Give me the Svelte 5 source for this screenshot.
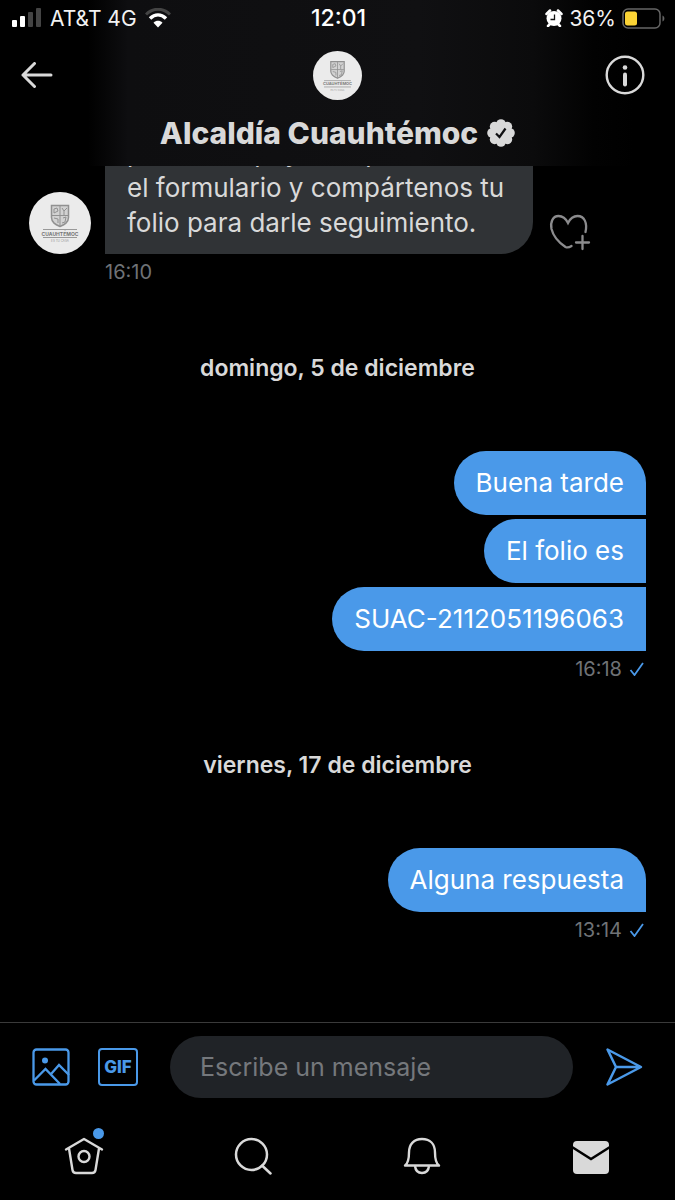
<script lang="ts">
	type Message = { text: string };
	type Group = { date: string; messages: Message[]; time: string };

	const groups: Group[] = [
		{
			date: 'domingo, 5 de diciembre',
			messages: [{ text: 'Buena tarde' }, { text: 'El folio es' }, { text: 'SUAC-2112051196063' }],
			time: '16:18'
		},
		{
			date: 'viernes, 17 de diciembre',
			messages: [{ text: 'Alguna respuesta' }],
			time: '13:14'
		}
	];

	let draft = $state('');

	function handleSubmit(event: SubmitEvent) {
		event.preventDefault();
		draft = '';
	}
</script>

{#snippet crest()}
	<svg viewBox="0 0 62 62" aria-hidden="true">
		<circle cx="31" cy="31" r="31" fill="#ebebeb" />
		<g fill="none" stroke="#919191">
			<path
				d="M22.500 13.500h17v12c0 5-4 7-8.500 9-4.500-2-8.500-4-8.500-9z"
				fill="#d2d2d2"
				stroke-width="1.500"
			/>
			<path d="M23 23.500h16M31 14v20M25 17l3-1 1 3-4 2zM33 16l2 3 3-3M35 19v4M25 26l4 1v4M34 26l3-1-1 5-3 1" />
			<path d="M14 37.500h34M14 45.500h34" stroke="#999" />
		</g>
		<text x="31" y="43.500" text-anchor="middle" font-size="5" font-weight="700" fill="#777">CUAUHTÉMOC</text>
		<text x="31" y="50" text-anchor="middle" font-size="3" fill="#999">ES TU CASA</text>
	</svg>
{/snippet}

<div class="app">
	<header>
		<div class="status-bar">
			<div class="status-side">
				<svg class="signal" viewBox="0 0 30 20" aria-hidden="true">
					<rect y="12" width="5" height="7" rx="1" fill="#fff" />
					<rect x="8" y="8" width="5" height="11" rx="1" fill="#fff" />
					<rect x="16" y="4" width="5" height="15" rx="1" fill="#444" />
					<rect x="24" width="5" height="19" rx="1" fill="#444" />
				</svg>
				<span>AT&amp;T 4G</span>
				<svg class="wifi" viewBox="0 0 26 20" aria-hidden="true">
					<path d="M1 6.500C8-.5 18-.5 25 6.500" fill="none" stroke="#444" stroke-width="3" />
					<path d="M5 10.500c5-4.700 11-4.700 16 0" fill="none" stroke="#fff" stroke-width="3.500" />
					<path d="M8.500 14.700c2.800-2.600 6.200-2.600 9 0L13 19.500z" fill="#fff" />
				</svg>
			</div>
			<time class="clock">12:01</time>
			<div class="status-side right">
				<svg class="alarm" viewBox="0 0 18 18" aria-hidden="true">
					<path d="M1.500 5 5 1.500M16.500 5 13 1.500M3 17l2-2M15 17l-2-2" stroke="#fff" stroke-width="2.500" stroke-linecap="round" />
					<circle cx="9" cy="9.500" r="7.500" fill="#fff" />
					<path d="M9.500 5.500v5H5.500" fill="none" stroke="#111" stroke-width="1.300" />
				</svg>
				<span>36%</span>
				<svg class="battery" viewBox="0 0 43 21" aria-hidden="true">
					<rect x="1" y="1" width="37" height="19" rx="5" fill="none" stroke="#666" stroke-width="1.500" />
					<rect x="3" y="3.500" width="12" height="14" rx="2.500" fill="#fbd335" />
					<path d="M40.500 7.500c2.500 1 2.500 5 0 6z" fill="#666" />
				</svg>
			</div>
		</div>

		<div class="nav-row">
			<button type="button" aria-label="Atrás">
				<svg class="back" viewBox="0 0 32 26">
					<path d="M13.500 1.500 2 13l11.500 11.500M2 13h28" fill="none" stroke="currentColor" stroke-width="3" stroke-linecap="round" stroke-linejoin="round" />
				</svg>
			</button>
			<div class="avatar small">{@render crest()}</div>
			<button type="button" aria-label="Información">
				<svg class="info" viewBox="0 0 40 40">
					<circle cx="20" cy="20" r="18.300" fill="none" stroke="currentColor" stroke-width="2.400" />
					<circle cx="20" cy="12.500" r="2.300" fill="currentColor" />
					<path d="M20 19.500v10" stroke="currentColor" stroke-width="4" stroke-linecap="round" />
				</svg>
			</button>
		</div>

		<h1>
			Alcaldía Cuauhtémoc
			<svg class="verified" viewBox="0 0 28 28" aria-label="Cuenta verificada">
				<g fill="currentColor">
					<circle cx="14" cy="14" r="10.500" />
					<circle cx="14" cy="5" r="4.800" />
					<circle cx="20.400" cy="7.600" r="4.800" />
					<circle cx="23" cy="14" r="4.800" />
					<circle cx="20.400" cy="20.400" r="4.800" />
					<circle cx="14" cy="23" r="4.800" />
					<circle cx="7.600" cy="20.400" r="4.800" />
					<circle cx="5" cy="14" r="4.800" />
					<circle cx="7.600" cy="7.600" r="4.800" />
				</g>
				<path d="m9 14.500 3.500 3.500 6-8.500" fill="none" stroke="#101012" stroke-width="2.200" />
			</svg>
		</h1>
	</header>

	<main>
		<div class="received">
			<div class="avatar">{@render crest()}</div>
			<p class="bubble">pedimos apoyes captura<br />el formulario y compártenos tu<br />folio para darle seguimiento.</p>
			<button type="button" aria-label="Reaccionar">
				<svg class="heart" viewBox="0 0 42 38">
					<g fill="none" stroke="currentColor" stroke-width="2.300" stroke-linecap="round">
						<path d="M36.500 19c2-9-1-16-8-16-4.500 0-7.500 3-9.500 7-2-4-5-7-9.500-7C4 3 1 9 2.500 16c2 8 8 14 14 18 2 1 3 1 6-1" />
						<path d="M27 29.500h13M33.500 23v13" />
					</g>
				</svg>
			</button>
		</div>
		<time class="stamp">16:10</time>

		{#each groups as group}
			<h2>{group.date}</h2>
			<div class="sent">
				{#each group.messages as message}
					<p class="bubble">{message.text}</p>
				{/each}
			</div>
			<div class="stamp sent-stamp">
				<time>{group.time}</time>
				<svg class="check" viewBox="0 0 16 14" aria-label="Enviado">
					<path d="m1.500 8 4 5L14 1" fill="none" stroke="#4a99e9" stroke-width="1.800" />
				</svg>
			</div>
		{/each}
	</main>

	<form class="composer" onsubmit={handleSubmit}>
		<button type="button" aria-label="Añadir foto">
			<svg class="photo" viewBox="0 0 38 38">
				<g fill="none" stroke="currentColor" stroke-width="2.300">
					<rect x="1.500" y="1.500" width="35" height="35" rx="3" />
					<path d="M2 32.500 13.500 21 28 36M19.500 25.500 27 17l10 10" />
				</g>
				<circle cx="13" cy="12.500" r="3" fill="currentColor" />
			</svg>
		</button>
		<button class="gif" type="button">GIF</button>
		<input bind:value={draft} type="text" placeholder="Escribe un mensaje" aria-label="Escribe un mensaje" />
		<button class="send" type="submit" aria-label="Enviar">
			<svg class="plane" viewBox="0 0 38 40">
				<path d="M2.500 2.500 36 20 2.500 37.500 11 20zM11 20h25" fill="none" stroke="currentColor" stroke-width="2.500" stroke-linejoin="round" />
			</svg>
		</button>
	</form>

	<nav>
		<button type="button" aria-label="Inicio">
			<svg viewBox="0 0 40 38">
				<g fill="none" stroke="currentColor" stroke-width="2.400" stroke-linecap="round" stroke-linejoin="round">
					<path d="M2 12.500 20 2l18 10.500M5 11.500 8.500 33q.500 3 3.500 3h16q3 0 3.500-3L35 11.500" />
					<circle cx="20" cy="19.500" r="5.500" />
				</g>
			</svg>
			<span class="dot"></span>
		</button>
		<button type="button" aria-label="Buscar">
			<svg viewBox="0 0 40 38">
				<g fill="none" stroke="currentColor" stroke-width="2.500" stroke-linecap="round">
					<circle cx="18.500" cy="17.500" r="15.500" />
					<path d="m29 28.500 8.500 8" />
				</g>
			</svg>
		</button>
		<button type="button" aria-label="Notificaciones">
			<svg viewBox="0 0 40 38">
				<g fill="none" stroke="currentColor" stroke-width="2.400" stroke-linejoin="round">
					<path d="M3 28.500c3-2 4-6 4-13C7 7 12 2 20 2s13 5 13 13.500c0 7 1 11 4 13z" />
					<path d="M13 29c.500 4.500 3 7 7 7s6.500-2.500 7-7" />
				</g>
			</svg>
		</button>
		<button type="button" aria-label="Mensajes">
			<svg viewBox="0 0 40 38">
				<rect x="2" y="4" width="36" height="33" rx="4" fill="currentColor" />
				<path d="M1 10 20 22 39 10" fill="none" stroke="#000" stroke-width="2.500" />
			</svg>
		</button>
	</nav>
</div>

<style>
	:global(body) {
		margin: 0;
		background: #000;
	}

	.app {
		display: flex;
		flex-direction: column;
		height: 100vh;
		background: #000;
		color: #d9d9d9;
		font-family: Inter, 'Liberation Sans', sans-serif;
	}

	button {
		display: grid;
		place-items: center;
		padding: 0;
		border: 0;
		background: none;
		color: inherit;
		font: inherit;
		cursor: pointer;
	}

	svg {
		display: block;
		flex: none;
	}

	header {
		flex: none;
		height: 166px;
		background: linear-gradient(90deg, #000 13%, #0e0e10 19%, #101012 62%, #0b0b0c 79%, #020202 88%, #000 94%);
	}

	.status-bar {
		display: grid;
		grid-template-columns: 1fr auto 1fr;
		align-items: center;
		height: 36px;
		padding: 0 10px 0 12px;
		color: #f2f2f2;
		font-size: 21px;
	}

	.status-side {
		display: flex;
		align-items: center;
		gap: 8px;
	}

	.right {
		justify-content: flex-end;
		gap: 6px;
	}

	.clock {
		font-weight: 500;
		font-size: 23px;
		color: #fff;
	}

	.signal {
		width: 30px;
		height: 20px;
	}

	.wifi {
		width: 26px;
		height: 20px;
	}

	.alarm {
		width: 18px;
		height: 18px;
	}

	.battery {
		width: 43px;
		height: 21px;
	}

	.nav-row {
		display: grid;
		grid-template-columns: 1fr auto 1fr;
		align-items: center;
		height: 78px;
	}

	.nav-row button:first-child {
		justify-self: start;
		padding-left: 21px;
	}

	.nav-row button:last-child {
		justify-self: end;
		padding-right: 30px;
	}

	.back {
		width: 32px;
		height: 26px;
	}

	.info {
		width: 40px;
		height: 40px;
	}

	.avatar {
		flex: none;
		width: 62px;
		height: 62px;
	}

	.avatar.small {
		width: 49px;
		height: 49px;
	}

	h1 {
		display: flex;
		align-items: center;
		justify-content: center;
		gap: 9px;
		margin: 0;
		font-size: 30px;
		line-height: 38px;
		font-weight: 800;
	}

	.verified {
		width: 28px;
		height: 28px;
	}

	main {
		display: flex;
		flex: 1;
		flex-direction: column;
		justify-content: flex-end;
		min-height: 0;
		padding: 0 29px 79px;
		overflow: hidden;
	}

	.bubble {
		margin: 0;
		padding: 14px 22px;
		border-radius: 32px 0 0 32px;
		background: #4a99e9;
		color: #fff;
		font-size: 26px;
		line-height: 36px;
	}

	.received {
		display: flex;
		align-items: flex-end;
		gap: 14px;
	}

	.received .bubble {
		padding-right: 29px;
		border-radius: 32px 32px 32px 0;
		background: #303336;
		color: #d9d9d9;
		line-height: 35px;
		white-space: nowrap;
	}

	.received button {
		padding: 0 0 3px 2px;
		color: #8b8b8d;
	}

	.heart {
		width: 42px;
		height: 38px;
	}

	.stamp {
		margin: 5px 0 0 76px;
		color: #6f7276;
		font-size: 20px;
		line-height: 26px;
	}

	.sent-stamp {
		display: flex;
		align-items: center;
		justify-content: flex-end;
		gap: 6px;
		margin-left: 0;
	}

	.check {
		width: 18px;
		height: 14px;
	}

	h2 {
		margin: 68px 0;
		font-size: 23px;
		line-height: 30px;
		font-weight: 600;
		text-align: center;
	}

	.sent {
		display: flex;
		flex-direction: column;
		align-items: flex-end;
		gap: 4px;
	}

	.sent .bubble:first-child {
		border-top-right-radius: 32px;
	}

	.composer {
		display: flex;
		flex: none;
		align-items: center;
		gap: 28px;
		padding: 13px 32px;
		border-top: 1px solid #3a3a3a;
		color: #4a99e9;
	}

	.photo {
		width: 38px;
		height: 38px;
	}

	.gif {
		box-sizing: border-box;
		flex: none;
		width: 40px;
		height: 38px;
		border: 2px solid currentColor;
		border-radius: 4px;
		font-size: 17px;
		font-weight: 800;
	}

	input {
		box-sizing: border-box;
		flex: 1;
		min-width: 0;
		height: 62px;
		margin: 0 4px;
		padding: 0 30px;
		border: 0;
		border-radius: 31px;
		outline: 0;
		background: #202327;
		color: #d9d9d9;
		font: inherit;
		font-size: 25px;
	}

	input::placeholder {
		color: #75787c;
		opacity: 1;
	}

	.plane {
		width: 38px;
		height: 40px;
	}

	nav {
		display: grid;
		flex: none;
		grid-template-columns: repeat(4, 1fr);
		height: 89px;
	}

	nav button {
		position: relative;
	}

	nav svg {
		width: 40px;
		height: 38px;
	}

	.dot {
		position: absolute;
		top: 17px;
		left: 55%;
		width: 11px;
		height: 11px;
		border-radius: 50%;
		background: #4a99e9;
	}
</style>
